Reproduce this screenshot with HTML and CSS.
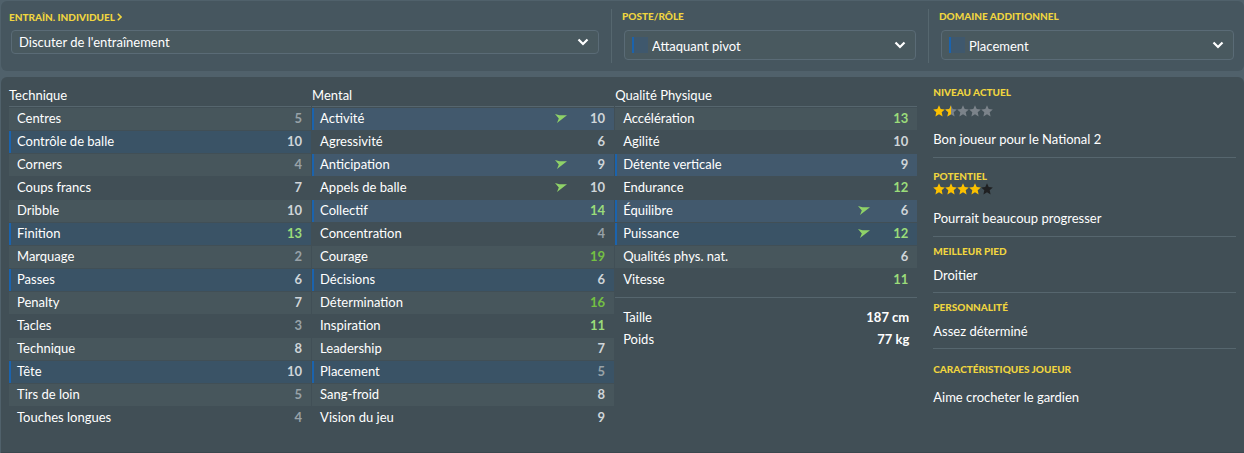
FILE: index.html
```
<!DOCTYPE html>
<html lang="fr">
<head>
  <meta charset="UTF-8">
  <title>Attributs du joueur</title>
  <meta name="viewport" content="width=device-width, initial-scale=1">
  <link rel="stylesheet" href="styles.css">
</head>
<body>
  <!-- icônes partagées -->
  <svg class="icons" aria-hidden="true">
    <symbol id="chevron" viewBox="0 0 12 8"><path d="M1.500 1.500 6 6l4.500-4.500" fill="none" stroke="#fff" stroke-width="2.200"/></symbol>
    <symbol id="arrow" viewBox="0 0 12 9"><path d="M0 0 4.500 1.200 12 1.300 2 9 3.800 4.500z" fill="#8fd268"/></symbol>
    <symbol id="star" viewBox="0 0 12 12"><path d="M6 .3 7.700 4.100 11.800 4.500 8.700 7.300 9.600 11.400 6 9.300 2.400 11.400 3.300 7.300.2 4.500 4.300 4.100z"/></symbol>
    <symbol id="half" viewBox="0 0 12 12"><path d="M6 .3V9.300L2.400 11.400 3.300 7.300.2 4.500 4.300 4.100z"/></symbol>
  </svg>

  <form class="panel training">
    <div class="field">
      <h2><a href="#">Entraîn. individuel <svg class="more" viewBox="0 0 5 8"><path d="M.8.8 4 4 .8 7.200" fill="none" stroke="#f0d53f" stroke-width="1.600"/></svg></a></h2>
      <div class="select small">
        <select aria-label="Entraînement individuel"><option>Discuter de l'entraînement</option></select>
        <svg class="chevron"><use href="#chevron"/></svg>
      </div>
    </div>
    <div class="field">
      <h2><label for="role">Poste/Rôle</label></h2>
      <div class="select">
        <span class="swatch"></span>
        <select id="role"><option>Attaquant pivot</option></select>
        <svg class="chevron"><use href="#chevron"/></svg>
      </div>
    </div>
    <div class="field">
      <h2><label for="focus">Domaine additionnel</label></h2>
      <div class="select">
        <span class="swatch"></span>
        <select id="focus"><option>Placement</option></select>
        <svg class="chevron"><use href="#chevron"/></svg>
      </div>
    </div>
  </form>

  <main class="panel profile">
    <div class="attributes">
      <table>
        <caption>Technique</caption>
        <tr><th>Centres</th><td class="low">5</td></tr>
        <tr class="key"><th>Contrôle de balle</th><td>10</td></tr>
        <tr><th>Corners</th><td class="low">4</td></tr>
        <tr><th>Coups francs</th><td>7</td></tr>
        <tr><th>Dribble</th><td>10</td></tr>
        <tr class="key"><th>Finition</th><td class="good">13</td></tr>
        <tr><th>Marquage</th><td class="low">2</td></tr>
        <tr class="key"><th>Passes</th><td>6</td></tr>
        <tr><th>Penalty</th><td>7</td></tr>
        <tr><th>Tacles</th><td class="low">3</td></tr>
        <tr><th>Technique</th><td>8</td></tr>
        <tr class="key"><th>Tête</th><td>10</td></tr>
        <tr><th>Tirs de loin</th><td class="low">5</td></tr>
        <tr><th>Touches longues</th><td class="low">4</td></tr>
      </table>

      <table>
        <caption>Mental</caption>
        <tr class="useful"><th>Activité</th><td><svg class="arrow"><use href="#arrow"/></svg>10</td></tr>
        <tr><th>Agressivité</th><td>6</td></tr>
        <tr class="useful"><th>Anticipation</th><td><svg class="arrow"><use href="#arrow"/></svg>9</td></tr>
        <tr><th>Appels de balle</th><td><svg class="arrow"><use href="#arrow"/></svg>10</td></tr>
        <tr class="useful"><th>Collectif</th><td class="good">14</td></tr>
        <tr><th>Concentration</th><td class="low">4</td></tr>
        <tr><th>Courage</th><td class="great">19</td></tr>
        <tr class="key"><th>Décisions</th><td>6</td></tr>
        <tr><th>Détermination</th><td class="great">16</td></tr>
        <tr><th>Inspiration</th><td class="good">11</td></tr>
        <tr><th>Leadership</th><td>7</td></tr>
        <tr class="key"><th>Placement</th><td class="low">5</td></tr>
        <tr><th>Sang-froid</th><td>8</td></tr>
        <tr><th>Vision du jeu</th><td>9</td></tr>
      </table>

      <div>
        <table>
          <caption>Qualité Physique</caption>
          <tr><th>Accélération</th><td class="good">13</td></tr>
          <tr><th>Agilité</th><td>10</td></tr>
          <tr class="useful"><th>Détente verticale</th><td>9</td></tr>
          <tr><th>Endurance</th><td class="good">12</td></tr>
          <tr class="useful"><th>Équilibre</th><td><svg class="arrow"><use href="#arrow"/></svg>6</td></tr>
          <tr class="key"><th>Puissance</th><td class="good"><svg class="arrow"><use href="#arrow"/></svg>12</td></tr>
          <tr><th>Qualités phys. nat.</th><td>6</td></tr>
          <tr><th>Vitesse</th><td class="good">11</td></tr>
        </table>
        <dl class="body">
          <div><dt>Taille</dt><dd>187 cm</dd></div>
          <div><dt>Poids</dt><dd>77 kg</dd></div>
        </dl>
      </div>
    </div>

    <aside>
      <section class="rating">
        <h2>Niveau actuel</h2>
        <div class="stars" role="img" aria-label="1,5 étoile sur 5">
          <svg><use href="#star"/></svg>
          <svg class="empty"><use href="#star"/><use class="gold" href="#half"/></svg>
          <svg class="empty"><use href="#star"/></svg>
          <svg class="empty"><use href="#star"/></svg>
          <svg class="empty"><use href="#star"/></svg>
        </div>
        <p>Bon joueur pour le National 2</p>
      </section>
      <section class="rating potential">
        <h2>Potentiel</h2>
        <div class="stars" role="img" aria-label="4 étoiles sur 5">
          <svg><use href="#star"/></svg>
          <svg><use href="#star"/></svg>
          <svg><use href="#star"/></svg>
          <svg><use href="#star"/></svg>
          <svg class="dark"><use href="#star"/></svg>
        </div>
        <p>Pourrait beaucoup progresser</p>
      </section>
      <section>
        <h2>Meilleur pied</h2>
        <p>Droitier</p>
      </section>
      <section>
        <h2>Personnalité</h2>
        <p>Assez déterminé</p>
      </section>
      <section class="traits">
        <h2>Caractéristiques joueur</h2>
        <p>Aime crocheter le gardien</p>
      </section>
    </aside>
  </main>
</body>
</html>
```
FILE: styles.css
```
* {
  box-sizing: border-box;
}

body {
  margin: 0;
  padding: 1px 0 0 1px;
  background-color: #50616b;
  color: #fff;
  font-family: Lato, "Liberation Sans", sans-serif;
  font-size: 13px;
  line-height: 16px;
}

.icons {
  display: none;
}

.panel {
  border-radius: 6px;
}

h2 {
  margin: 0;
  color: #f0d53f;
  font-size: 10px;
  font-weight: 900;
  line-height: 12px;
  text-transform: uppercase;
}

h2 a {
  color: inherit;
  text-decoration: none;
}

p {
  margin: 0;
}

/* Bandeau d'entraînement */
.training {
  display: grid;
  grid-template-columns: 1fr 317px 316px;
  margin-bottom: 6px;
  padding: 8px 0;
  background-color: #46565f;
}

.field {
  height: 54px;
  padding: 1px 10px 0;
}

.field + .field {
  border-left: 1px solid #56676f;
}

.field:first-child {
  padding: 2px 12px 0 8px;
}

.select {
  display: flex;
  align-items: center;
  height: 30px;
  margin: 8px 2px 0;
  padding: 0 9px 0 7px;
  background-color: #49595f;
  border: 1px solid #5a6b76;
  border-radius: 4px;
}

.select.small {
  height: 24px;
  margin: 7px 0 0 2px;
}

.field:last-child .select {
  margin-right: 0;
}

select {
  flex: 1;
  min-width: 0;
  padding: 0;
  appearance: none;
  background: none;
  border: none;
  color: #fff;
  font: inherit;
}

.swatch {
  width: 16px;
  height: 16px;
  margin-right: 4px;
  background-color: #3f586d;
  border-left: 2px solid #1b63ad;
}

.swatch + select {
  padding-top: 2px;
}

.chevron {
  width: 12px;
  height: 8px;
}

.more {
  width: 5px;
  height: 8px;
}

/* Attributs */
.profile {
  display: grid;
  grid-template-columns: 3fr 1fr;
  gap: 16px;
  min-height: 376px;
  padding: 9px 8px;
  background-color: #414f56;
  border-bottom: 1px solid #3a474e;
  border-radius: 6px 6px 0 0;
}

.attributes {
  display: grid;
  grid-template-columns: repeat(3, 1fr);
  gap: 1px;
  align-items: start;
}

table {
  width: 100%;
  border-collapse: collapse;
}

caption {
  height: 21px;
  border-bottom: 1px solid #56666e;
  line-height: 18px;
  text-align: left;
}

tr {
  height: 23px;
  border-top: 1px solid #414f56;
}

tr:nth-child(odd) {
  background-color: #47565c;
}

tr.key {
  background-color: #3a5366;
}

tr.useful {
  background-color: #42596d;
}

th,
td {
  padding: 0 9px 2px 8px;
  font-weight: normal;
  text-align: left;
}

tr.key th,
tr.useful th {
  box-shadow: inset 2px 0 #1b63ad;
}

td {
  width: 67px;
  color: #cfd5d9;
  font-weight: bold;
  text-align: right;
}

td.low {
  color: #98a2a8;
}

td.good {
  color: #9bdc7a;
}

td.great {
  color: #74c043;
}

td:has(.arrow) {
  display: flex;
  justify-content: flex-end;
  align-items: center;
  height: 22px;
}

.arrow {
  width: 12px;
  height: 9px;
  margin-right: auto;
}

.body {
  margin: 5px 0 0;
  padding: 8px 8px 0;
  border-top: 1px solid #56666e;
}

.body div {
  display: flex;
  justify-content: space-between;
  line-height: 22px;
}

.body dd {
  margin: 0;
  font-weight: bold;
}

/* Colonne de droite */
aside section {
  padding: 8px 0 9px;
  border-bottom: 1px solid #56666e;
}

aside section:last-child {
  border-bottom: none;
}

aside p {
  margin-top: 10px;
}

aside .rating {
  padding: 0 0 10px;
}

aside .potential {
  padding-top: 12px;
}

.stars {
  display: flex;
  height: 12px;
  margin-top: 7px;
  fill: #fbc000;
}

.potential .stars {
  margin-top: 1px;
}

.rating p {
  margin-top: 14px;
}

.potential p {
  margin-top: 15px;
}

.stars svg {
  width: 12px;
  height: 12px;
}

.stars .empty {
  fill: #7b838a;
}

.gold {
  fill: #fbc000;
}

.stars .dark {
  fill: #1f2022;
}

aside .traits {
  padding-top: 14px;
}

.traits p {
  margin-top: 14px;
}

@media (max-width: 900px) {
  .training,
  .profile {
    grid-template-columns: 1fr;
  }
}
```
